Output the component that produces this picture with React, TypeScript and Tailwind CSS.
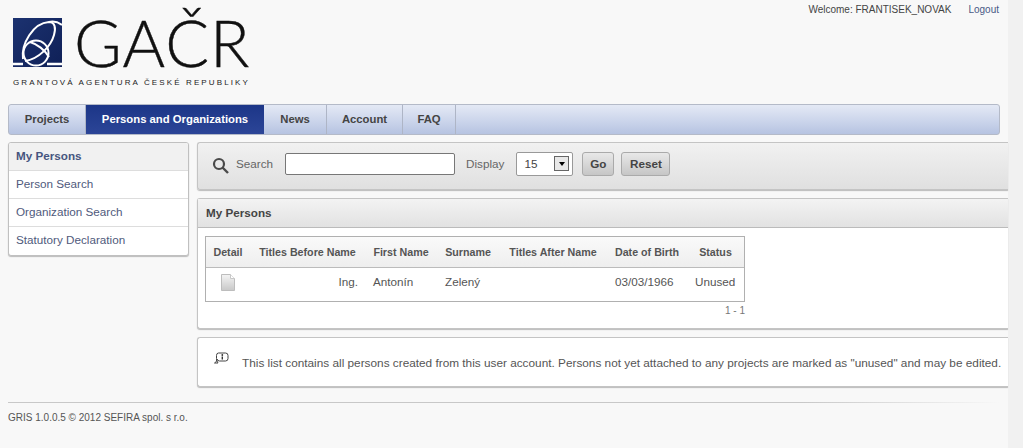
import React from 'react';

const sans = { fontFamily: '"Liberation Sans", Arial, sans-serif' };

const tabs = [
  { label: 'Projects', width: 'w-[77px]', active: false },
  { label: 'Persons and Organizations', width: 'w-[178px]', active: true },
  { label: 'News', width: 'w-[63px]', active: false },
  { label: 'Account', width: 'w-[76px]', active: false },
  { label: 'FAQ', width: 'w-[53px]', active: false },
];

const sideLinks = ['Person Search', 'Organization Search', 'Statutory Declaration'];

const columns = [
  { label: 'Detail', width: 'w-[44px]' },
  { label: 'Titles Before Name', width: 'w-[115px]' },
  { label: 'First Name', width: 'w-[72px]' },
  { label: 'Surname', width: 'w-[62px]' },
  { label: 'Titles After Name', width: 'w-[108px]' },
  { label: 'Date of Birth', width: 'w-[80px]' },
  { label: 'Status', width: 'w-[57px]' },
];

const LogoMark = () => (
  <svg width="49" height="49" viewBox="0 0 49 49" className="shrink-0">
    <defs>
      <linearGradient id="mk" x1="0" y1="0" x2="1" y2="1">
        <stop offset="0" stopColor="#1c3270" />
        <stop offset="1" stopColor="#0f2057" />
      </linearGradient>
    </defs>
    <rect width="49" height="49" fill="url(#mk)" />
    <g fill="none" stroke="#fff" strokeWidth="2">
      <circle cx="23" cy="35" r="12.5" />
      <path d="M10 41 C8 26 20 5 36 4 C42 4 43 10 41 17 C38 28 26 41 12 43" />
      <path d="M17 24 C24 26 32 32 36 39" />
      <path d="M36 4 C40 3 45 4 49 7" />
      <path d="M0 46 H10 M34 46 H49" strokeWidth="2.400" />
    </g>
  </svg>
);

const SearchIcon = () => (
  <svg width="18" height="18" viewBox="0 0 18 18" className="shrink-0">
    <circle cx="7" cy="7" r="5" fill="none" stroke="#4a4a4a" strokeWidth="2.200" />
    <path d="M10.500 10.500 L16 16" stroke="#4a4a4a" strokeWidth="2.400" />
  </svg>
);

const PageIcon = () => (
  <svg width="14" height="17" viewBox="0 0 14 17">
    <defs>
      <linearGradient id="pg" x1="0" y1="0" x2="0" y2="1">
        <stop offset="0" stopColor="#f4f4f4" />
        <stop offset="1" stopColor="#c8c8c8" />
      </linearGradient>
    </defs>
    <path d="M.5.5 H9.5 L13.5 4.5 V16.5 H.5 Z" fill="url(#pg)" stroke="#bdbdbd" />
    <path d="M9.5.5 V4.5 H13.5" fill="#fff" stroke="#c8c8c8" />
  </svg>
);

const InfoIcon = () => (
  <svg width="15" height="14" viewBox="0 0 15 14" className="shrink-0">
    <path d="M4.500 1 H11.500 Q14 1 14 3.500 V6.500 Q14 9 11.500 9 H5.500 Q3.500 9 3 7 Q3 10 .5 11 H4 Q2.500 9 2.500 6.500 V3.500 Q2.500 1 4.500 1 Z" fill="#fff" stroke="#444" strokeWidth="1" />
    <circle cx="8.300" cy="3" r=".9" fill="#333" />
    <path d="M8.300 4.500 V7.500" stroke="#333" strokeWidth="1.400" />
  </svg>
);

export default function App() {
  return (
    <div className="w-[1023px] h-[448px] overflow-hidden flex bg-[#f1f1f1] text-[11.7px] text-[#555]" style={sans}>
      <div className="w-[1008px] h-full shrink-0 bg-[#f8f8f8] flex flex-col">
        <header className="h-[104px] shrink-0 flex justify-between">
          <div className="pl-[13px] pt-[18px]">
            <div className="flex items-start gap-[12px] h-[56px]">
              <LogoMark />
              <span
                className="text-[65px] leading-[52px] tracking-[1px] text-[#111] -mt-[2px] [-webkit-text-stroke:0.4px_#111]"
                style={{ fontFamily: 'Lato, sans-serif', fontWeight: 300 }}
              >
                GAČR
              </span>
            </div>
            <div className="text-[8px] leading-[10px] mt-[4px] tracking-[2.120px] text-[#222] whitespace-nowrap">
              GRANTOVÁ AGENTURA ČESKÉ REPUBLIKY
            </div>
          </div>
          <div className="flex pt-[4px] pr-[9px] text-[10px] leading-[12px] text-[#444]">
            <span>Welcome: FRANTISEK_NOVAK</span>
            <a className="ml-[17px] text-[#4a5a86]">Logout</a>
          </div>
        </header>

        <nav className="ml-[8px] w-[992px] h-[31px] shrink-0 flex rounded-[3px] border border-[#b4bac8] overflow-hidden bg-gradient-to-b from-[#e4e9f5] via-[#c9d3ea] via-60% to-[#b6c3e1]">
          {tabs.map((tab) => (
            <div
              key={tab.label}
              className={`${tab.width} shrink-0 flex items-center justify-center text-[11.3px] font-bold ${
                tab.active
                  ? 'bg-gradient-to-b from-[#1c3688] to-[#2c4597] text-white'
                  : 'border-r border-[#aeb5c6] text-[#444]'
              }`}
            >
              {tab.label}
            </div>
          ))}
        </nav>

        <div className="flex gap-[8px] pl-[8px] mt-[7px] items-start">
          <aside className="w-[181px] shrink-0 rounded-[3px] border border-[#c0c0c0] shadow-[0_1px_1px_#bbb] bg-white overflow-hidden">
            <div className="h-[28px] flex items-center pl-[7px] pb-[2px] bg-[#f1f1f1] font-bold text-[#46557f] border-b border-[#ddd]">
              My Persons
            </div>
            {sideLinks.map((link, i) => (
              <div
                key={link}
                className={`h-[28px] flex items-center pl-[7px] pb-[2px] text-[#4f5a7c] ${i < 2 ? 'border-b border-[#ddd]' : ''}`}
              >
                {link}
              </div>
            ))}
          </aside>

          <main className="flex-1 min-w-0 flex flex-col gap-[8px]">
            <div className="h-[48px] flex items-center pl-[14px] pb-[5px] rounded-l-[3px] border border-r-0 border-[#c4c4c4] shadow-[0_1px_1px_#bbb] bg-gradient-to-b from-[#f1f1f1] to-[#e0e0e0]">
              <span className="mt-[4px]">
                <SearchIcon />
              </span>
              <span className="ml-[6px] text-[#666]">Search</span>
              <input className="ml-[12px] w-[170px] h-[22px] bg-white rounded-[2px] border border-[#777]" />
              <span className="ml-[11px] text-[#666]">Display</span>
              <div className="ml-[12px] w-[57px] h-[24px] bg-white rounded-[2px] border border-[#999] flex items-center justify-between pl-[7px] pr-[3px] text-[#444]">
                15
                <span className="w-[15px] h-[15px] border border-[#666] bg-[#e8e8e8] flex items-center justify-center">
                  <span className="border-x-[3.500px] border-x-transparent border-t-[4px] border-t-black" />
                </span>
              </div>
              <button className="ml-[9px] w-[32px] h-[24px] rounded-[3px] border border-[#aaa] bg-gradient-to-b from-[#e8e8e8] to-[#c6c6c6] font-bold text-[#444]">
                Go
              </button>
              <button className="ml-[7px] w-[49px] h-[24px] rounded-[3px] border border-[#aaa] bg-gradient-to-b from-[#e8e8e8] to-[#c6c6c6] font-bold text-[#444]">
                Reset
              </button>
            </div>

            <section className="h-[131px] rounded-l-[3px] border border-r-0 border-[#c4c4c4] shadow-[0_1px_1px_#bbb] bg-white">
              <div className="h-[29px] flex items-center pl-[8px] pb-[1px] font-bold text-[#444] border-b border-[#bbb] bg-gradient-to-b from-[#f3f3f3] to-[#e2e2e2]">
                My Persons
              </div>
              <div className="w-[540px] ml-[7px] mt-[8px]">
                <div className="border border-[#b0b0b0]">
                  <div className="h-[31px] flex items-center border-b border-[#bbb] bg-gradient-to-b from-[#fafafa] to-[#eee] text-[10.700px] font-bold text-[#555]">
                    {columns.map((col) => (
                      <div key={col.label} className={`${col.width} shrink-0 text-center whitespace-nowrap`}>
                        {col.label}
                      </div>
                    ))}
                  </div>
                  <div className="h-[33px] flex items-center pb-[5px] text-[#555]">
                    <div className="w-[44px] shrink-0 flex justify-center">
                      <PageIcon />
                    </div>
                    <div className="w-[108px] shrink-0 text-right">Ing.</div>
                    <div className="w-[72px] pl-[15px] shrink-0">Antonín</div>
                    <div className="w-[63px] pl-[15px] shrink-0">Zelený</div>
                    <div className="w-[108px] shrink-0" />
                    <div className="w-[80px] pl-[14px] shrink-0 whitespace-nowrap">03/03/1966</div>
                    <div className="whitespace-nowrap pl-[14px]">Unused</div>
                  </div>
                </div>
                <div className="text-right text-[10px] leading-[12px] mt-[3px] text-[#777]">1 - 1</div>
              </div>
            </section>

            <div className="h-[50px] flex items-center pl-[16px] rounded-l-[3px] border border-r-0 border-[#c4c4c4] shadow-[0_1px_1px_#bbb] bg-white">
              <span className="-mt-[6px]">
                <InfoIcon />
              </span>
              <span className="ml-[13px] mt-[3px] text-[11.800px] whitespace-nowrap">
                This list contains all persons created from this user account. Persons not yet attached to any projects are marked as "unused" and may be edited.
              </span>
            </div>
          </main>
        </div>

        <footer className="mt-[15px] mx-[8px] h-[30px] text-[10px] leading-[12px] text-[#555]">
          <div className="h-[1px] bg-gradient-to-r from-[#c8c8c8] via-[#c8c8c8] via-80% to-transparent" />
          <div className="pt-[9px] h-[29px]">
            GRIS 1.0.0.5 © 2012 SEFIRA spol. s r.o.
          </div>
        </footer>
      </div>
    </div>
  );
}
